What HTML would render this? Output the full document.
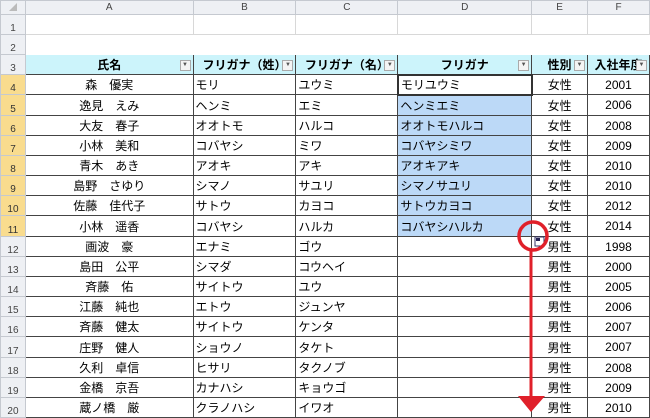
<!DOCTYPE html>
<html><head><meta charset="utf-8"><style>
*{margin:0;padding:0;box-sizing:border-box}
body{width:650px;height:417px;overflow:hidden;background:#fff;font-family:"Liberation Sans","Noto Sans CJK JP",sans-serif;font-size:12px;color:#000;position:relative}
table{border-collapse:collapse;table-layout:fixed;position:absolute;left:0;top:0}
td{overflow:hidden;white-space:nowrap;padding:0 2px;border:1px solid #d8d8d8;height:20px;position:relative}
tr.h td{height:14px;background:#eef0f4;color:#444;text-align:center;font-size:10px;border-color:#c5c9d0}
td.rh{background:#eef0f4;color:#444;text-align:center;font-size:10px;vertical-align:bottom;border-color:#c5c9d0}
td.sel{background:#f7d88a;}
td.rh.sel{background:#f9dc8e;color:#333}
tr.t td:not(.rh){border:1px solid #444}
tr.hd td:not(.rh){background:#ccf4fb;font-weight:bold;text-align:center}
.c{text-align:center}
.dd{position:absolute;right:2px;top:5px;width:11px;height:11px;border:1px solid #aaa;background:#f4f4f4;font-size:6px;line-height:9px;text-align:center;color:#555;font-weight:normal}
td.b{background:#bcd9f7}
</style></head><body>
<table>
<colgroup><col style="width:25px"><col style="width:168px"><col style="width:103px"><col style="width:102px"><col style="width:134px"><col style="width:56px"><col style="width:62px"></colgroup>
<tr class="h"><td style="font-size:8px;color:#bbb">◢</td><td>A</td><td>B</td><td>C</td><td class="sel">D</td><td>E</td><td>F</td></tr>
<tr><td class="rh">1</td><td></td><td></td><td></td><td></td><td></td><td></td></tr>
<tr><td class="rh">2</td><td style="border-color:#fff"></td><td style="border-color:#fff"></td><td style="border-color:#fff"></td><td style="border-color:#fff"></td><td style="border-color:#fff"></td><td style="border-color:#fff"></td></tr>
<tr class="t hd"><td class="rh">3</td><td>氏名<span class="dd">▼</span></td><td>フリガナ（姓）<span class="dd">▼</span></td><td>フリガナ（名）<span class="dd">▼</span></td><td>フリガナ<span class="dd">▼</span></td><td>性別<span class="dd">▼</span></td><td>入社年度<span class="dd">▼</span></td></tr>
<tr class="t"><td class="rh sel">4</td><td class="c">森　優実</td><td>モリ</td><td>ユウミ</td><td style="border:2px solid #333">モリユウミ</td><td class="c">女性</td><td class="c">2001</td></tr>
<tr class="t" style="height:21px"><td class="rh sel">5</td><td class="c">逸見　えみ</td><td>ヘンミ</td><td>エミ</td><td class="b">ヘンミエミ</td><td class="c">女性</td><td class="c">2006</td></tr>
<tr class="t"><td class="rh sel">6</td><td class="c">大友　春子</td><td>オオトモ</td><td>ハルコ</td><td class="b">オオトモハルコ</td><td class="c">女性</td><td class="c">2008</td></tr>
<tr class="t"><td class="rh sel">7</td><td class="c">小林　美和</td><td>コバヤシ</td><td>ミワ</td><td class="b">コバヤシミワ</td><td class="c">女性</td><td class="c">2009</td></tr>
<tr class="t"><td class="rh sel">8</td><td class="c">青木　あき</td><td>アオキ</td><td>アキ</td><td class="b">アオキアキ</td><td class="c">女性</td><td class="c">2010</td></tr>
<tr class="t"><td class="rh sel">9</td><td class="c">島野　さゆり</td><td>シマノ</td><td>サユリ</td><td class="b">シマノサユリ</td><td class="c">女性</td><td class="c">2010</td></tr>
<tr class="t"><td class="rh sel">10</td><td class="c">佐藤　佳代子</td><td>サトウ</td><td>カヨコ</td><td class="b">サトウカヨコ</td><td class="c">女性</td><td class="c">2012</td></tr>
<tr class="t" style="height:21px"><td class="rh sel">11</td><td class="c">小林　遥香</td><td>コバヤシ</td><td>ハルカ</td><td class="b">コバヤシハルカ</td><td class="c">女性</td><td class="c">2014</td></tr>
<tr class="t"><td class="rh">12</td><td class="c">画波　豪</td><td>エナミ</td><td>ゴウ</td><td></td><td class="c">男性</td><td class="c">1998</td></tr>
<tr class="t"><td class="rh">13</td><td class="c">島田　公平</td><td>シマダ</td><td>コウヘイ</td><td></td><td class="c">男性</td><td class="c">2000</td></tr>
<tr class="t"><td class="rh">14</td><td class="c">斉藤　佑</td><td>サイトウ</td><td>ユウ</td><td></td><td class="c">男性</td><td class="c">2005</td></tr>
<tr class="t"><td class="rh">15</td><td class="c">江藤　純也</td><td>エトウ</td><td>ジュンヤ</td><td></td><td class="c">男性</td><td class="c">2006</td></tr>
<tr class="t"><td class="rh">16</td><td class="c">斉藤　健太</td><td>サイトウ</td><td>ケンタ</td><td></td><td class="c">男性</td><td class="c">2007</td></tr>
<tr class="t" style="height:21px"><td class="rh">17</td><td class="c">庄野　健人</td><td>ショウノ</td><td>タケト</td><td></td><td class="c">男性</td><td class="c">2007</td></tr>
<tr class="t"><td class="rh">18</td><td class="c">久利　卓信</td><td>ヒサリ</td><td>タクノブ</td><td></td><td class="c">男性</td><td class="c">2008</td></tr>
<tr class="t"><td class="rh">19</td><td class="c">金橋　京吾</td><td>カナハシ</td><td>キョウゴ</td><td></td><td class="c">男性</td><td class="c">2009</td></tr>
<tr class="t"><td class="rh">20</td><td class="c">蔵ノ橋　厳</td><td>クラノハシ</td><td>イワオ</td><td></td><td class="c">男性</td><td class="c">2010</td></tr>
</table>
<svg width="650" height="417" style="position:absolute;left:0;top:0">
<rect x="535" y="237" width="9" height="9" fill="#fff" stroke="#336" stroke-width="1"/>
<rect x="536" y="238" width="4" height="3" fill="#225"/>
<circle cx="533" cy="236" r="14" fill="none" stroke="#e0202a" stroke-width="3.5"/>
<line x1="531" y1="250" x2="531" y2="398" stroke="#e0202a" stroke-width="3"/>
<polygon points="518,396 545,396 531,412" fill="#e0202a"/>
</svg>
</body></html>
